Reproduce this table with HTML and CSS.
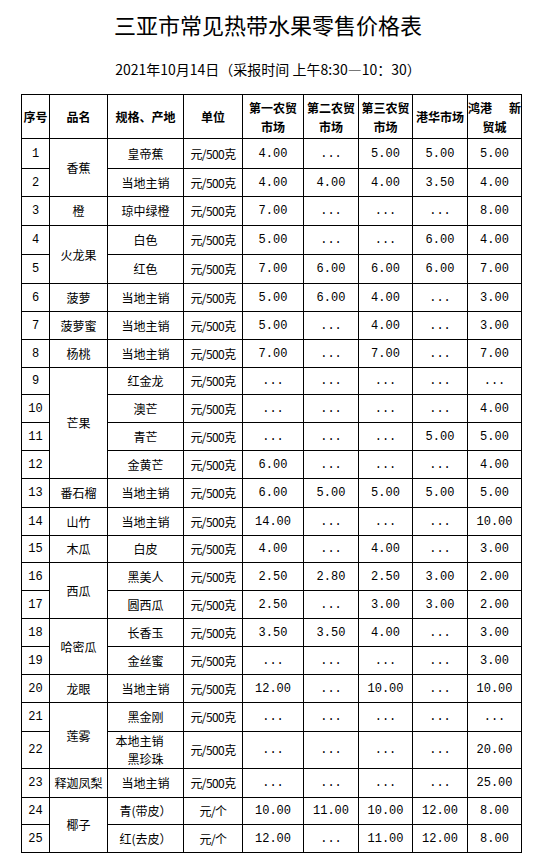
FILE: index.html
```html
<!DOCTYPE html>
<html lang="zh-CN">
<head>
<meta charset="utf-8">
<title>三亚市常见热带水果零售价格表</title>
<link rel="stylesheet" href="styles.css">
</head>
<body>
<h1 class="title">三亚市常见热带水果零售价格表</h1>
<p class="sub">2021年10月14日（采报时间 上午8:30—10：30）</p>
<table class="tbl">
<colgroup>
<col class="c1"><col class="c2"><col class="c3"><col class="c4"><col class="c5"><col class="c6"><col class="c7"><col class="c8"><col class="c9">
</colgroup>
<thead>
<tr class="hd">
<th class="tight">序号</th><th>品名</th><th>规格、产地</th><th>单位</th><th class="tight">第一农贸<br>市场</th><th class="tight">第二农贸<br>市场</th><th class="tight">第三农贸<br>市场</th><th class="tight">港华市场</th><th class="tight"><span class="spread"><span>鸿港</span><span>新</span></span>贸城</th>
</tr>
</thead>
<tbody>
<tr class="h30"><td class="n">1</td><td rowspan="2">香蕉</td><td>皇帝蕉</td><td class="u">元/500克</td><td class="v">4.00</td><td class="v">...</td><td class="v">5.00</td><td class="v">5.00</td><td class="v">5.00</td></tr>
<tr class="h28"><td class="n">2</td><td>当地主销</td><td class="u">元/500克</td><td class="v">4.00</td><td class="v">4.00</td><td class="v">4.00</td><td class="v">3.50</td><td class="v">4.00</td></tr>
<tr class="h29"><td class="n">3</td><td>橙</td><td>琼中绿橙</td><td class="u">元/500克</td><td class="v">7.00</td><td class="v">...</td><td class="v">...</td><td class="v">...</td><td class="v">8.00</td></tr>
<tr class="h29"><td class="n">4</td><td rowspan="2">火龙果</td><td>白色</td><td class="u">元/500克</td><td class="v">5.00</td><td class="v">...</td><td class="v">...</td><td class="v">6.00</td><td class="v">4.00</td></tr>
<tr class="h29"><td class="n">5</td><td>红色</td><td class="u">元/500克</td><td class="v">7.00</td><td class="v">6.00</td><td class="v">6.00</td><td class="v">6.00</td><td class="v">7.00</td></tr>
<tr class="h28"><td class="n">6</td><td>菠萝</td><td>当地主销</td><td class="u">元/500克</td><td class="v">5.00</td><td class="v">6.00</td><td class="v">4.00</td><td class="v">...</td><td class="v">3.00</td></tr>
<tr class="h28"><td class="n">7</td><td>菠萝蜜</td><td>当地主销</td><td class="u">元/500克</td><td class="v">5.00</td><td class="v">...</td><td class="v">4.00</td><td class="v">...</td><td class="v">3.00</td></tr>
<tr class="h28"><td class="n">8</td><td>杨桃</td><td>当地主销</td><td class="u">元/500克</td><td class="v">7.00</td><td class="v">...</td><td class="v">7.00</td><td class="v">...</td><td class="v">7.00</td></tr>
<tr class="h27"><td class="n">9</td><td rowspan="4">芒果</td><td>红金龙</td><td class="u">元/500克</td><td class="v">...</td><td class="v">...</td><td class="v">...</td><td class="v">...</td><td class="v">...</td></tr>
<tr class="h28"><td class="n">10</td><td>澳芒</td><td class="u">元/500克</td><td class="v">...</td><td class="v">...</td><td class="v">...</td><td class="v">...</td><td class="v">4.00</td></tr>
<tr class="h28"><td class="n">11</td><td>青芒</td><td class="u">元/500克</td><td class="v">...</td><td class="v">...</td><td class="v">...</td><td class="v">5.00</td><td class="v">5.00</td></tr>
<tr class="h28"><td class="n">12</td><td>金黄芒</td><td class="u">元/500克</td><td class="v">6.00</td><td class="v">...</td><td class="v">...</td><td class="v">...</td><td class="v">4.00</td></tr>
<tr class="h29"><td class="n">13</td><td>番石榴</td><td>当地主销</td><td class="u">元/500克</td><td class="v">6.00</td><td class="v">5.00</td><td class="v">5.00</td><td class="v">5.00</td><td class="v">5.00</td></tr>
<tr class="h28"><td class="n">14</td><td>山竹</td><td>当地主销</td><td class="u">元/500克</td><td class="v">14.00</td><td class="v">...</td><td class="v">...</td><td class="v">...</td><td class="v">10.00</td></tr>
<tr class="h27"><td class="n">15</td><td>木瓜</td><td>白皮</td><td class="u">元/500克</td><td class="v">4.00</td><td class="v">...</td><td class="v">4.00</td><td class="v">...</td><td class="v">3.00</td></tr>
<tr class="h28"><td class="n">16</td><td rowspan="2">西瓜</td><td>黑美人</td><td class="u">元/500克</td><td class="v">2.50</td><td class="v">2.80</td><td class="v">2.50</td><td class="v">3.00</td><td class="v">2.00</td></tr>
<tr class="h28"><td class="n">17</td><td>圆西瓜</td><td class="u">元/500克</td><td class="v">2.50</td><td class="v">...</td><td class="v">3.00</td><td class="v">3.00</td><td class="v">2.00</td></tr>
<tr class="h28"><td class="n">18</td><td rowspan="2">哈密瓜</td><td>长香玉</td><td class="u">元/500克</td><td class="v">3.50</td><td class="v">3.50</td><td class="v">4.00</td><td class="v">...</td><td class="v">3.00</td></tr>
<tr class="h28"><td class="n">19</td><td>金丝蜜</td><td class="u">元/500克</td><td class="v">...</td><td class="v">...</td><td class="v">...</td><td class="v">...</td><td class="v">3.00</td></tr>
<tr class="h28"><td class="n">20</td><td>龙眼</td><td>当地主销</td><td class="u">元/500克</td><td class="v">12.00</td><td class="v">...</td><td class="v">10.00</td><td class="v">...</td><td class="v">10.00</td></tr>
<tr class="h29"><td class="n">21</td><td rowspan="2">莲雾</td><td>黑金刚</td><td class="u">元/500克</td><td class="v">...</td><td class="v">...</td><td class="v">...</td><td class="v">...</td><td class="v">...</td></tr>
<tr class="h36"><td class="n">22</td><td class="two"><span class="shift">本地主销</span><br>黑珍珠</td><td class="u">元/500克</td><td class="v">...</td><td class="v">...</td><td class="v">...</td><td class="v">...</td><td class="v">20.00</td></tr>
<tr class="h29"><td class="n">23</td><td>释迦凤梨</td><td>当地主销</td><td class="u">元/500克</td><td class="v">...</td><td class="v">...</td><td class="v">...</td><td class="v">...</td><td class="v">25.00</td></tr>
<tr class="h27"><td class="n">24</td><td rowspan="2">椰子</td><td>青(带皮）</td><td class="u">元/个</td><td class="v">10.00</td><td class="v">11.00</td><td class="v">10.00</td><td class="v">12.00</td><td class="v">8.00</td></tr>
<tr class="h28"><td class="n">25</td><td>红(去皮）</td><td class="u">元/个</td><td class="v">12.00</td><td class="v">...</td><td class="v">11.00</td><td class="v">12.00</td><td class="v">8.00</td></tr>
</tbody>
</table>
</body>
</html>
```

FILE: styles.css
```css
* { box-sizing: border-box; }
html, body { margin: 0; padding: 0; background: #fff; }
body {
  width: 536px;
  font-family: "Noto Sans CJK SC", "Noto Sans", sans-serif;
  color: #000;
}
.title {
  margin: 9px 0 0;
  font-size: 22px;
  font-weight: normal;
  line-height: 30px;
  text-align: center;
}
.sub {
  margin: 20px 0 0;
  font-size: 14px;
  line-height: 20px;
  text-align: center;
}
.tbl {
  margin: 15px 0 0 21px;
  border-collapse: collapse;
  table-layout: fixed;
  width: 500px;
}
.c1 { width: 28px; }
.c2 { width: 58px; }
.c3 { width: 76px; }
.c4 { width: 59px; }
.c5 { width: 61px; }
.c6 { width: 55px; }
.c7 { width: 54px; }
.c8 { width: 55px; }
.c9 { width: 54px; }
.tbl th, .tbl td {
  border: 1px solid #000;
  padding: 0 1px;
  text-align: center;
  vertical-align: middle;
  font-size: 12px;
  line-height: 14px;
  font-weight: normal;
  white-space: nowrap;
}
.tbl th {
  font-weight: bold;
  line-height: 19px;
}
.tbl th.tight { padding: 0; }
.hd { height: 44px; }
.h27 { height: 27px; }
.h28 { height: 28px; }
.h29 { height: 29px; }
.h30 { height: 30px; }
.h36 { height: 36px; }
.spread {
  display: flex;
  justify-content: space-between;
}
.tbl td.n, .tbl td.v {
  font-family: "Liberation Mono", "DejaVu Sans Mono", monospace;
  font-size: 12px;
}
.tbl td.u {
  padding: 0;
  letter-spacing: -0.6px;
}
.tbl td.two { line-height: 18px; }
.shift {
  display: inline-block;
  margin-right: 12px;
}
```
